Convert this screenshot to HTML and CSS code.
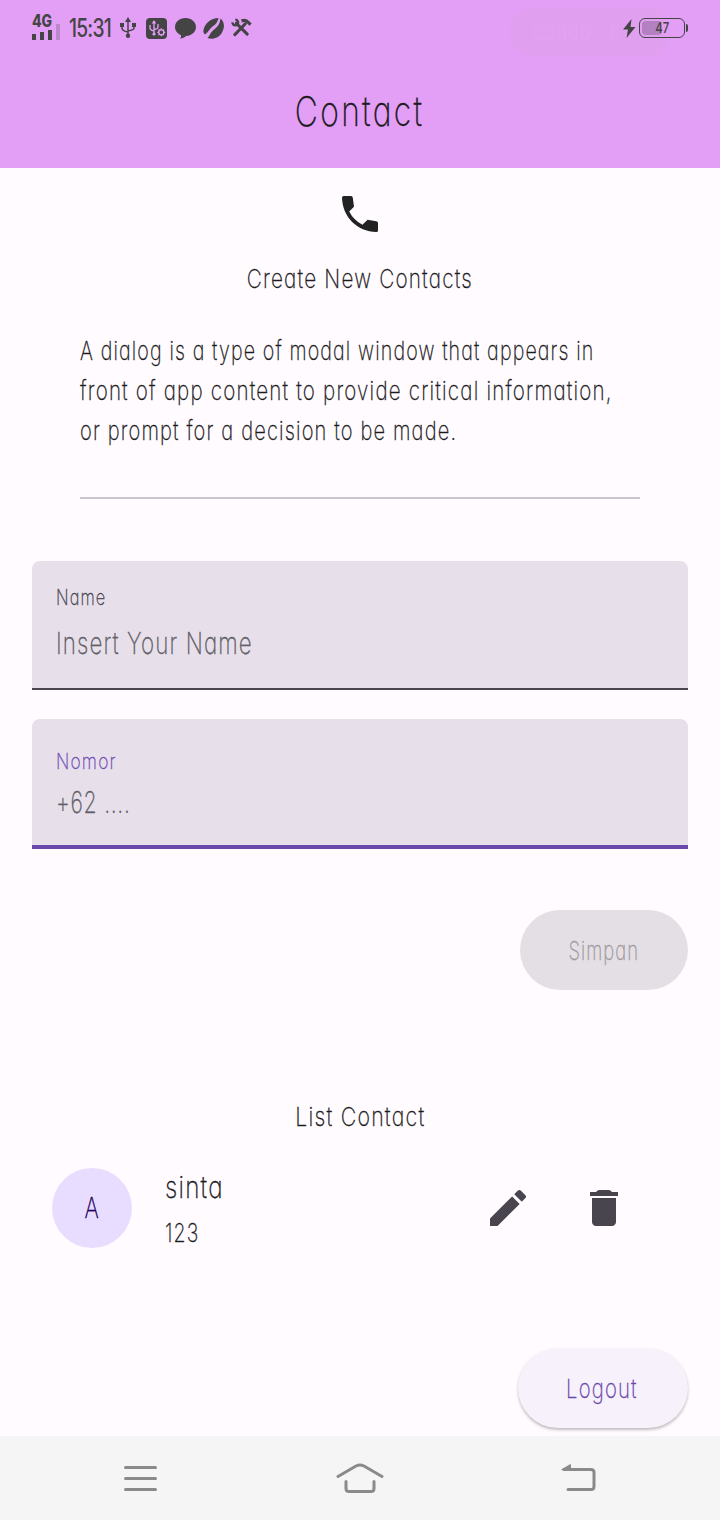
FILE: index.html
```html
<!DOCTYPE html>
<html lang="id">
<head>
<meta charset="utf-8">
<title>Contact</title>
<link rel="stylesheet" href="styles.css">
</head>
<body>
<div class="screen">
  <header class="app-bar">
    <div class="status">
      <div class="network">
        <span class="network-type"><span class="t t-4g">4G</span></span>
        <svg width="28" height="17" viewBox="0 0 28 17"><path d="M0 11h4v6H0zM8 9h4v8H8zM16 7h4v10h-4z"/><path d="M24 1h4v16h-4z" opacity=".25"/></svg>
      </div>
      <span class="clock"><span class="t t-clock">15:31</span></span>
      <svg class="s-icon usb" width="16" height="22" viewBox="0 0 16 22" fill="none" stroke="#444" stroke-width="1.5"><path d="M8 3v15M2 9v2q0 3 6 4M14 8v3q0 2-6 3"/><path d="M8 0l3 5H5z" fill="#444" stroke="none"/><circle cx="8" cy="18.7" r="2.2" fill="#444" stroke="none"/><path d="M0 6h4v4H0zM12 6h4v4h-4z" fill="#444" stroke="none"/></svg>
      <svg class="s-icon" width="21" height="21" viewBox="0 0 21 21"><rect width="21" height="21" rx="4"/><g fill="none" stroke="#e39ff6" stroke-width="1.3"><path d="M8 4v12M4 7v3q0 2 4 3M12 6v3q0 2-4 2.5"/><circle cx="15.3" cy="14.3" r="2.5"/><path d="M15.3 10.3v1.500M15.3 16.800v1.500M11.300 14.300h1.500M17.800 14.300h1.500M12.500 11.500l1 1M17 16l1 1M12.500 17.100l1-1M17 12.600l1-1"/></g><path d="M8 2l2.300 3.500H5.700z" fill="#e39ff6"/><circle cx="8" cy="16" r="1.600" fill="#e39ff6"/></svg>
      <svg class="s-icon" width="21" height="21" viewBox="0 0 21 21"><path d="M10.500 0C16.500 0 21 4 21 9s-4.500 8.700-10 9c-1.500 1.500-3.500 2.600-6 2.500 1-1 1.300-2.200 1-3.300C2.300 15.600 0 12.600 0 9c0-5 4.500-9 10.500-9z"/></svg>
      <svg class="s-icon" width="21" height="21" viewBox="0 0 21 21"><path d="M17.500.5c4 3 4.500 9 1.500 14-3 5.500-9.500 7.500-14.500 5.500 2-2 2.500-4.500 5-7 3.500-3.500 7-4.500 8-12.500z"/><path d="M15.500 0C14 7 10.500 7 7 11c-2 2.500-3 4-5 5.500-1.500-1.500-2-3-1.500-4.500C2 5 8 0 15.500 0z"/></svg>
      <svg class="s-icon" width="21" height="20" viewBox="0 0 22 21" fill="none" stroke="#444"><path d="M5.500 5.500L17 17" stroke-width="3.200" stroke-linecap="round"/><path d="M1.500 4.500a3 3 0 1 0 3-2.800" stroke-width="2.400"/><path d="M4 17.500L15 6" stroke-width="3.200" stroke-linecap="round"/><path d="M11 3q5-1.500 7 1.500l2.500 2.500" stroke-width="3.400"/></svg>
      <div class="ghost-toast"><span class="t t-ghost">gagap). K</span></div>
      <div class="power">
        <svg width="13" height="19" viewBox="0 0 13 19"><path d="M8.500 0L0 10.500h5L3.500 19 12.500 8H7.500z"/></svg>
        <div class="battery"><div class="battery-level"></div><span class="t t-batt">47</span></div>
        <div class="battery-tip"></div>
      </div>
    </div>
    <h1 class="title"><span class="t t-title">Contact</span></h1>
  </header>

  <main class="content">
    <section class="intro">
      <svg class="phone" width="48" height="48" viewBox="0 0 24 24"><path d="M20.100 15.600l-4.300-.7-2.600 2.500a15 15 0 0 1-6.600-6.600L9 8.400 8.400 3.900Q8.300 3 7.500 3H3.900Q3 3 3 3.900C3.300 13.500 10.500 20.800 20.200 21q.8 0 .8-.8v-3.700q0-.8-.9-.9z"/></svg>
      <h2 class="heading"><span class="t t-create">Create New Contacts</span></h2>
      <p class="copy">
        <span class="t t-l1">A dialog is a type of modal window that appears in</span>
        <span class="t t-l2">front of app content to provide critical information,</span>
        <span class="t t-l3">or prompt for a decision to be made.</span>
      </p>
    </section>

    <div class="field">
      <span class="label"><span class="t t-name">Name</span></span>
      <span class="value"><span class="t t-insert">Insert Your Name</span></span>
    </div>
    <div class="field field-active">
      <span class="label"><span class="t t-nomor">Nomor</span></span>
      <span class="value"><span class="t t-62">+62 ....</span></span>
    </div>

    <div class="button save"><span class="t t-simpan">Simpan</span></div>

    <h2 class="heading list-heading"><span class="t t-list">List Contact</span></h2>
    <div class="contact">
      <div class="avatar"><span class="t t-a">A</span></div>
      <div class="person">
        <span class="person-name"><span class="t t-sinta">sinta</span></span>
        <span class="person-number"><span class="t t-123">123</span></span>
      </div>
      <svg class="edit" width="48" height="48" viewBox="0 0 24 24"><path d="M3 17.250V21h3.750L17.810 9.940l-3.750-3.750zM20.710 7.040a1 1 0 0 0 0-1.410l-2.340-2.340a1 1 0 0 0-1.410 0l-1.830 1.830 3.750 3.750z"/></svg>
      <svg class="delete" width="48" height="48" viewBox="0 0 24 24"><path d="M6 19c0 1.100.9 2 2 2h8c1.100 0 2-.9 2-2V7H6zM19 4h-3q-.8-1-1.600-1H9.600Q8.800 3 8 4H5v2h14z"/></svg>
    </div>

    <div class="button logout"><span class="t t-logout">Logout</span></div>
  </main>

  <nav class="nav">
    <svg class="menu" width="33" height="25" viewBox="0 0 33 25"><path d="M1.500 1.500h30M1.500 12.500h30M1.500 23.500h30"/></svg>
    <svg class="home" width="48" height="30" viewBox="0 0 48 30"><path d="M2 13.500L20 3q4-2 8 0l18 10.500M10 18.500v7q0 3 3 3h22q3 0 3-3v-7"/></svg>
    <svg width="36" height="28" viewBox="0 0 36 28"><path d="M3 5.500h27q3 0 3 3v14q0 3-3 3H7"/><path d="M1 5.500l8.500-5v5z" stroke-width="1" fill="#8a8a8a"/></svg>
  </nav>
</div>
</body>
</html>
```
FILE: styles.css
```css
* { box-sizing: border-box; }
body {
  margin: 0;
  background: #fffbff;
  color: #1d1b1e;
  font-family: Inter, Lato, sans-serif;
  font-weight: 200;
  font-feature-settings: "cv11", "calt" 0;
}
h1, h2, p { margin: 0; font-weight: inherit; }
svg { display: block; flex: none; }
.screen { width: 720px; height: 1520px; display: flex; flex-direction: column; overflow: hidden; }

/* Condensed lettering: each text carries its own horizontal scale. */
.t {
  display: inline-block;
  white-space: nowrap;
  letter-spacing: 1.5px;
  transform: scaleX(var(--sx, .75));
  transform-origin: left center;
  -webkit-text-stroke: .3px currentColor;
}
.t-4g { --sx: .82; }
.t-clock { --sx: .77; }
.t-ghost { --sx: .8; }
.t-title { --sx: .775; }
.t-create { --sx: .797; }
.t-l1 { --sx: .756; }
.t-l2 { --sx: .791; }
.t-l3 { --sx: .772; }
.t-name { --sx: .745; }
.t-insert { --sx: .745; }
.t-nomor { --sx: .79; }
.t-62 { --sx: .71; }
.t-simpan { --sx: .71; }
.t-list { --sx: .82; }
.t-sinta { --sx: .81; }
.t-123 { --sx: .75; }
.t-logout { --sx: .78; }

.app-bar { height: 168px; background: #e39ff6; }
.status { height: 56px; display: flex; align-items: center; padding: 0 32px; color: #444; position: relative; }
.status .t { letter-spacing: 0; -webkit-text-stroke: 0; }
.status svg { fill: #444; }
.status .usb, .status svg[fill="none"] { fill: none; }
.network { width: 37px; height: 26px; position: relative; }
.network svg { position: absolute; left: 0; top: 8px; }
.network-type { display: block; font-size: 17px; line-height: 13px; font-weight: 800; }
.clock { width: 51px; flex: none; font-size: 25px; line-height: 28px; font-weight: 500; }
.status .t-clock { letter-spacing: -1px; }
.usb { margin-right: 10px; }
.s-icon + .s-icon { margin-right: 7px; }
.usb + .s-icon { margin-right: 8px; }
.ghost-toast { position: absolute; left: 510px; top: 8px; width: 160px; height: 48px; border-radius: 24px; background: #e19fef; color: #e5a4f2; padding-left: 22px; font-size: 25px; line-height: 46px; }
.power { margin-left: auto; display: flex; align-items: center; position: relative; }
.battery { width: 46px; height: 20px; margin-left: 3px; border: 1.500px solid #444; border-radius: 6px; position: relative; text-align: center; font-size: 15px; line-height: 18px; font-weight: 500; }
.battery-level { position: absolute; left: 2px; top: 2px; width: 20px; height: 14px; border-radius: 4px; background: #b381c2; }
.battery .t { position: relative; }
.battery-tip { width: 2px; height: 8px; margin-left: 1px; background: #444; border-radius: 0 2px 2px 0; }
.title { height: 110px; font-size: 41px; line-height: 110px; text-align: center; }
.title .t { letter-spacing: 3px; }

.content { height: 1268px; padding: 22px 32px 0; }
.intro { height: 309px; margin: 0 48px; border-bottom: 2px solid #cac4cf; }
.phone { margin: 0 auto; fill: #222; }
.heading { font-size: 26px; line-height: 40px; text-align: center; margin-top: 21px; }
.copy { margin-top: 32px; font-size: 26px; line-height: 40px; }
.copy .t { display: block; width: max-content; }

.field { height: 129px; margin-top: 62px; padding: 22px 24px 0; background: #e7e0eb; border-radius: 8px 8px 0 0; border-bottom: 2px solid #49454e; color: #49454e; }
.label, .value { display: block; }
.label { font-size: 22px; line-height: 28px; }
.value { font-size: 30px; line-height: 40px; margin-top: 12px; color: #625d66; }
.field-active { height: 130px; margin-top: 29px; padding-top: 28px; border-bottom: 4px solid #6a49ab; }
.field-active .label { color: #7350b8; }
.field-active .value { margin-top: 7px; }
.field-active .value .t { letter-spacing: 1px; }

.button { width: 168px; height: 80px; margin-left: auto; border-radius: 40px; text-align: center; font-size: 26px; line-height: 81px; }
.save { margin-top: 61px; background: #e4dfe4; color: #9f9ba0; }
.list-heading { margin-top: 107px; }
.contact { height: 80px; margin-top: 31px; padding: 0 20px; display: flex; align-items: center; }
.avatar { width: 80px; height: 80px; border-radius: 50%; background: #e9ddff; color: #22005d; text-align: center; font-size: 29px; line-height: 79px; }
.person { flex: 1; padding-left: 33px; }
.person-name, .person-number { display: block; }
.person-name { font-size: 30px; line-height: 50px; }
.person-number { font-size: 26px; line-height: 42px; }
.edit { margin-right: 48px; fill: #49454e; }
.delete { margin-right: 40px; fill: #49454e; }
.logout { width: 170px; margin-top: 100px; padding-right: 2px; background: #f6f1fb; color: #6a49ab; box-shadow: 0 2px 3px rgba(0, 0, 0, .25); }

.title .t, .heading .t, .button .t, .avatar .t, .battery .t { transform-origin: center; }

.nav { height: 84px; padding: 0 123px 0 124px; background: #f5f5f5; display: flex; align-items: center; justify-content: space-between; }
.nav svg { fill: none; stroke: #8a8a8a; stroke-width: 3; stroke-linecap: round; stroke-linejoin: round; }
.nav .menu { margin-top: 1px; }
.nav .home { margin-left: 2px; }
```
